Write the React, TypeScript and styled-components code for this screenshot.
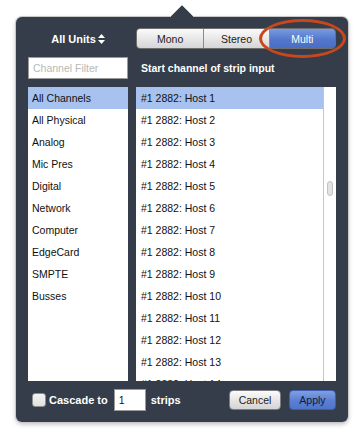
import React from "react";
import styled, { createGlobalStyle } from "styled-components";

const Global = createGlobalStyle`
  html, body { margin: 0; padding: 0; background: #ffffff; }
  body { font-family: "Liberation Sans", Arial, sans-serif; }
  * { box-sizing: border-box; }
`;

const Page = styled.div`
  position: relative;
  width: 364px;
  height: 440px;
  padding: 17px 16px 0 16px;
`;

const Arrow = styled.svg`
  position: absolute;
  left: 168px;
  top: 4px;
  width: 28px;
  height: 15px;
  z-index: 2;
`;

const Panel = styled.div`
  position: relative;
  width: 332px;
  height: 405px;
  background: #343d49;
  border-radius: 6px;
  box-shadow: 0 0 0 1px #c9c9c9, 0 2px 5px rgba(0, 0, 0, 0.28);
  padding: 11px 12px 10px 12px;
  display: grid;
  grid-template-columns: 100px 200px;
  grid-template-rows: 21px 22px 294px 22px;
  column-gap: 8px;
  row-gap: 8px;
  align-content: start;
`;

const UnitsCell = styled.div`
  display: flex;
  align-items: center;
  justify-content: center;
  color: #ffffff;
  font-weight: bold;
  font-size: 11px;
  gap: 2px;
`;

const Segmented = styled.div`
  display: flex;
  height: 21px;
  border: 1px solid #6e6e6e;
  border-radius: 4px;
  overflow: hidden;
`;

const Segment = styled.div<{ $active?: boolean; $w: number }>`
  width: ${(p) => p.$w}px;
  display: flex;
  align-items: center;
  justify-content: center;
  font-size: 10.5px;
  color: ${(p) => (p.$active ? "#ffffff" : "#1c1c24")};
  background: ${(p) =>
    p.$active
      ? "linear-gradient(#7a9be0, #5377cc 55%, #4a6ec6)"
      : "linear-gradient(#fbfbfb, #e6e6e6 55%, #d6d6d6)"};
  & + & {
    border-left: 1px solid #8a8a8a;
  }
`;

const FilterInput = styled.input`
  width: 100px;
  height: 22px;
  margin: 0;
  border: 1px solid #9a9a9a;
  background: #ffffff;
  font-family: "Liberation Sans", Arial, sans-serif;
  font-size: 10.5px;
  padding: 0 4px;
  outline: none;
  &::placeholder { color: #b8b8b8; }
`;

const Label = styled.div`
  display: flex;
  align-items: center;
  padding-left: 5px;
  color: #ffffff;
  font-weight: bold;
  font-size: 10.5px;
`;

const ListBox = styled.div`
  background: #ffffff;
  overflow: hidden;
  display: flex;
`;

const ListItems = styled.div`
  flex: 1;
  display: flex;
  flex-direction: column;
  overflow: hidden;
`;

const Item = styled.div<{ $selected?: boolean; $pad: number }>`
  flex: 0 0 22px;
  height: 22px;
  display: flex;
  align-items: center;
  padding-left: ${(p) => p.$pad}px;
  font-size: 10.5px;
  color: #111111;
  white-space: nowrap;
  background: ${(p) => (p.$selected ? "#a7c2ee" : "transparent")};
`;

const ScrollTrack = styled.div`
  width: 13px;
  border-left: 1px solid #c6c6c6;
  background: #ffffff;
  display: flex;
  flex-direction: column;
  align-items: center;
  padding-top: 94px;
`;

const Thumb = styled.div`
  width: 6px;
  height: 15px;
  border-radius: 3px;
  background: #e2e2e2;
  border: 1px solid #c2c2c2;
`;

const Footer = styled.div`
  grid-column: 1 / -1;
  display: flex;
  align-items: center;
  justify-content: space-between;
`;

const Cascade = styled.div`
  display: flex;
  align-items: center;
  padding-left: 4px;
  white-space: nowrap;
  color: #ffffff;
  font-weight: bold;
  font-size: 11px;
`;

const Check = styled.div`
  width: 14px;
  height: 14px;
  border-radius: 3px;
  background: linear-gradient(#f4f4f4, #e0e0e0);
  border: 1px solid #8e8e8e;
  margin-right: 3px;
  flex: none;
`;

const CountBox = styled.div`
  width: 32px;
  height: 22px;
  background: #ffffff;
  border: 1px solid #9a9a9a;
  color: #111;
  font-weight: normal;
  font-size: 10.5px;
  display: flex;
  align-items: center;
  padding-left: 4px;
  margin: 0 5px 0 6px;
  flex: none;
`;

const Buttons = styled.div`
  display: flex;
  align-items: center;
  gap: 8px;
`;

const Btn = styled.div<{ $primary?: boolean; $w: number }>`
  width: ${(p) => p.$w}px;
  height: 20px;
  border-radius: 4px;
  display: flex;
  align-items: center;
  justify-content: center;
  font-size: 10.5px;
  color: ${(p) => (p.$primary ? "#101a3a" : "#1c1c1c")};
  border: 1px solid ${(p) => (p.$primary ? "#3f5fae" : "#7d7d7d")};
  background: ${(p) =>
    p.$primary
      ? "linear-gradient(#7f9fe4, #5a7fd2 55%, #5074cb)"
      : "linear-gradient(#fbfbfb, #e4e4e4 55%, #d4d4d4)"};
`;

const Annotation = styled.div`
  position: absolute;
  left: 259px;
  top: 19px;
  width: 87px;
  height: 39px;
  border: 3.5px solid #c9471c;
  border-radius: 50%;
  pointer-events: none;
  z-index: 3;
`;

const categories = [
  "All Channels",
  "All Physical",
  "Analog",
  "Mic Pres",
  "Digital",
  "Network",
  "Computer",
  "EdgeCard",
  "SMPTE",
  "Busses",
];

const hosts = Array.from({ length: 14 }, (_, i) => `#1 2882: Host ${i + 1}`);

export default function App() {
  return (
    <>
      <Global />
      <Page>
        <Arrow viewBox="0 0 28 15">
          <polygon points="1,14 14,1 27,14" fill="#343d49" />
          <polyline points="1,14 14,1 27,14" fill="none" stroke="#c9c9c9" strokeWidth="1" />
          <rect x="0" y="13" width="28" height="2" fill="#343d49" />
        </Arrow>
        <Panel>
          <UnitsCell>
            All Units
            <svg width="7" height="10" viewBox="0 0 7 10">
              <polygon points="3.5,0 7,4 0,4" fill="#fff" />
              <polygon points="0,6 7,6 3.5,10" fill="#fff" />
            </svg>
          </UnitsCell>
          <Segmented>
            <Segment $w={67}>Mono</Segment>
            <Segment $w={66}>Stereo</Segment>
            <Segment $w={67} $active>Multi</Segment>
          </Segmented>
          <FilterInput placeholder="Channel Filter" readOnly />
          <Label>Start channel of strip input</Label>
          <ListBox>
            <ListItems>
              {categories.map((c, i) => (
                <Item key={c} $pad={4} $selected={i === 0}>
                  {c}
                </Item>
              ))}
            </ListItems>
          </ListBox>
          <ListBox>
            <ListItems>
              {hosts.map((h, i) => (
                <Item key={h} $pad={5} $selected={i === 0}>
                  {h}
                </Item>
              ))}
            </ListItems>
            <ScrollTrack>
              <Thumb />
            </ScrollTrack>
          </ListBox>
          <Footer>
            <Cascade>
              <Check />
              Cascade to
              <CountBox>1</CountBox>
              strips
            </Cascade>
            <Buttons>
              <Btn $w={52}>Cancel</Btn>
              <Btn $w={47} $primary>
                Apply
              </Btn>
            </Buttons>
          </Footer>
        </Panel>
        <Annotation />
      </Page>
    </>
  );
}
